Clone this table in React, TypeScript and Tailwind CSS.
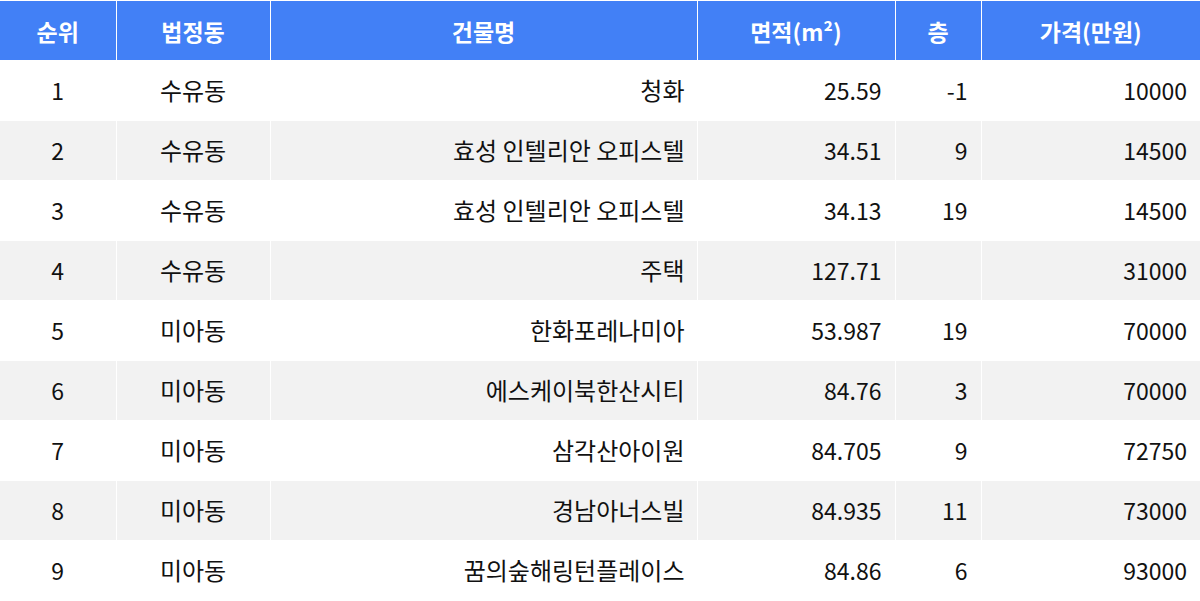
const rows = [
  ['1', '수유동', '청화', '25.59', '-1', '10000'],
  ['2', '수유동', '효성 인텔리안 오피스텔', '34.51', '9', '14500'],
  ['3', '수유동', '효성 인텔리안 오피스텔', '34.13', '19', '14500'],
  ['4', '수유동', '주택', '127.71', '', '31000'],
  ['5', '미아동', '한화포레나미아', '53.987', '19', '70000'],
  ['6', '미아동', '에스케이북한산시티', '84.76', '3', '70000'],
  ['7', '미아동', '삼각산아이원', '84.705', '9', '72750'],
  ['8', '미아동', '경남아너스빌', '84.935', '11', '73000'],
  ['9', '미아동', '꿈의숲해링턴플레이스', '84.86', '6', '93000'],
]

const headers = ['순위', '법정동', '건물명', '면적(m²)', '층', '가격(만원)']
const widths = ['w-[116px]', 'w-[154px]', 'w-[427px]', 'w-[198px]', 'w-[86px]', 'w-[219px]']
const cellStyle = [
  'text-center',
  'text-center text-[24px]',
  'text-right pr-[12px] text-[24px]',
  'text-right pr-[13px]',
  'text-right pr-[13px]',
  'text-right pr-[13px]',
]

export default function App() {
  return (
    <div
      className="w-[1200px] h-[601px] bg-white overflow-hidden pt-px"
      style={{ fontFamily: '"Noto Sans CJK KR", "Noto Sans", sans-serif' }}
    >
      <table className="w-[1200px] table-fixed border-collapse text-[23px] text-[#111]">
        <colgroup>
          {widths.map((w, i) => (
            <col key={i} className={w} />
          ))}
        </colgroup>
        <thead>
          <tr className="h-[59px] bg-[#4280f6]">
            {headers.map((h, i) => (
              <th
                key={i}
                className="border-x border-white font-bold text-white text-center pt-[2px] first:border-l-0 last:border-r-0"
              >
                {h}
              </th>
            ))}
          </tr>
        </thead>
        <tbody>
          {rows.map((r, ri) => (
            <tr key={ri} className={`h-[60px] ${ri % 2 === 1 ? 'bg-[#f2f2f2]' : 'bg-white'}`}>
              {r.map((c, ci) => (
                <td
                  key={ci}
                  className={`border border-white first:border-l-0 last:border-r-0 ${cellStyle[ci]}`}
                >
                  {c}
                </td>
              ))}
            </tr>
          ))}
        </tbody>
      </table>
    </div>
  )
}
